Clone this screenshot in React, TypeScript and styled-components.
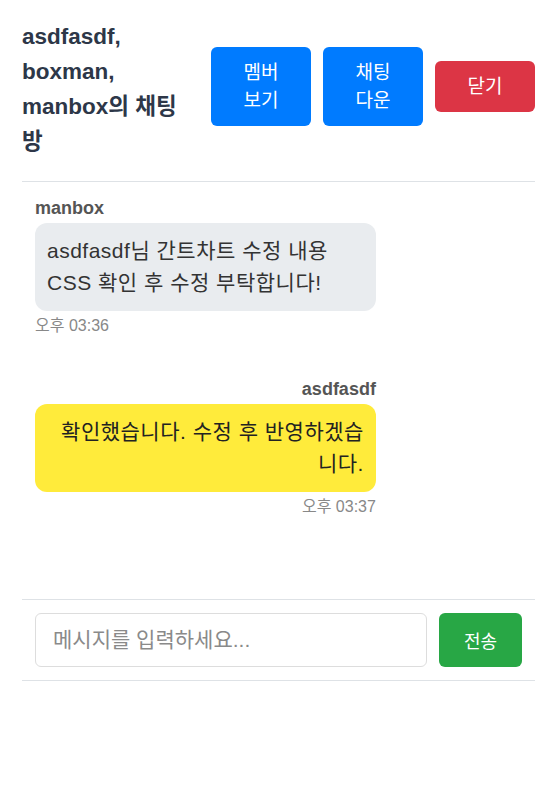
import React from "react";
import styled, { createGlobalStyle } from "styled-components";

const GlobalStyle = createGlobalStyle`
  html, body {
    margin: 0;
    padding: 0;
    background: #ffffff;
  }
  body {
    font-family: "Liberation Sans", Arial, "Noto Sans CJK KR", sans-serif;
    color: #333333;
  }
  * { box-sizing: border-box; }
`;

const Page = styled.div`
  padding: 0 18px 0 22px;
`;

const Header = styled.header`
  display: flex;
  align-items: center;
  padding: 19px 0 22px;
  border-bottom: 1px solid #dee2e6;
`;

const Title = styled.h2`
  flex: 0 0 165px;
  margin: 0;
  font-size: 22.5px;
  line-height: 35px;
  font-weight: 700;
  color: #2d3748;
`;

const ButtonGroup = styled.div`
  display: flex;
  align-items: center;
  gap: 12px;
  margin-left: auto;
  margin-top: -5px;
`;

const HeaderButton = styled.button<{ $variant: "primary" | "danger" }>`
  width: 100px;
  padding: 11.5px 20px;
  border: none;
  border-radius: 6px;
  background: ${(p) => (p.$variant === "danger" ? "#dc3545" : "#007bff")};
  color: #ffffff;
  font-family: inherit;
  font-size: 19px;
  line-height: 28px;
  word-break: keep-all;
  cursor: pointer;
`;

const MessageList = styled.div`
  height: 417px;
  padding: 13px;
  overflow-y: auto;
`;

const MessageGroup = styled.div<{ $mine: boolean }>`
  max-width: 70%;
  margin-bottom: 38px;
  text-align: ${(p) => (p.$mine ? "right" : "left")};
`;

const Sender = styled.div`
  font-size: 18px;
  line-height: 27px;
  font-weight: 700;
  color: #555555;
  margin-bottom: 1px;
`;

const Bubble = styled.div<{ $mine: boolean }>`
  padding: 12px;
  border-radius: 12px;
  background: ${(p) => (p.$mine ? "#ffeb3b" : "#e9ecef")};
  color: ${(p) => (p.$mine ? "#222222" : "#333333")};
  font-size: 21px;
  line-height: 32px;
  letter-spacing: 0.5px;
`;

const Time = styled.div`
  margin-top: 3px;
  font-size: 16px;
  line-height: 24px;
  color: #888888;
`;

const InputBar = styled.form`
  display: flex;
  align-items: center;
  gap: 12px;
  padding: 13px;
  border-top: 1px solid #dee2e6;
  border-bottom: 1px solid #dee2e6;
`;

const MessageInput = styled.input`
  flex: 1;
  min-width: 0;
  height: 54px;
  padding: 0 17px;
  border: 1px solid #dddddd;
  border-radius: 6px;
  font-family: inherit;
  font-size: 21px;
  color: #333333;
  outline: none;
  &::placeholder {
    color: #8a8a8a;
  }
`;

const SendButton = styled.button`
  width: 83px;
  height: 54px;
  border: none;
  border-radius: 6px;
  background: #28a745;
  color: #ffffff;
  font-family: inherit;
  font-size: 18px;
  cursor: pointer;
`;

const messages = [
  {
    sender: "manbox",
    text: "asdfasdf님 간트차트 수정 내용 CSS 확인 후 수정 부탁합니다!",
    time: "오후 03:36",
    mine: false,
  },
  {
    sender: "asdfasdf",
    text: "확인했습니다. 수정 후 반영하겠습니다.",
    time: "오후 03:37",
    mine: true,
  },
];

export default function App() {
  return (
    <>
      <GlobalStyle />
      <Page>
        <Header>
          <Title>asdfasdf, boxman, manbox의 채팅방</Title>
          <ButtonGroup>
            <HeaderButton $variant="primary">멤버 보기</HeaderButton>
            <HeaderButton $variant="primary">채팅 다운</HeaderButton>
            <HeaderButton $variant="danger">닫기</HeaderButton>
          </ButtonGroup>
        </Header>
        <MessageList>
          {messages.map((m, i) => (
            <MessageGroup key={i} $mine={m.mine}>
              <Sender>{m.sender}</Sender>
              <Bubble $mine={m.mine}>{m.text}</Bubble>
              <Time>{m.time}</Time>
            </MessageGroup>
          ))}
        </MessageList>
        <InputBar onSubmit={(e) => e.preventDefault()}>
          <MessageInput placeholder="메시지를 입력하세요..." />
          <SendButton type="submit">전송</SendButton>
        </InputBar>
      </Page>
    </>
  );
}
